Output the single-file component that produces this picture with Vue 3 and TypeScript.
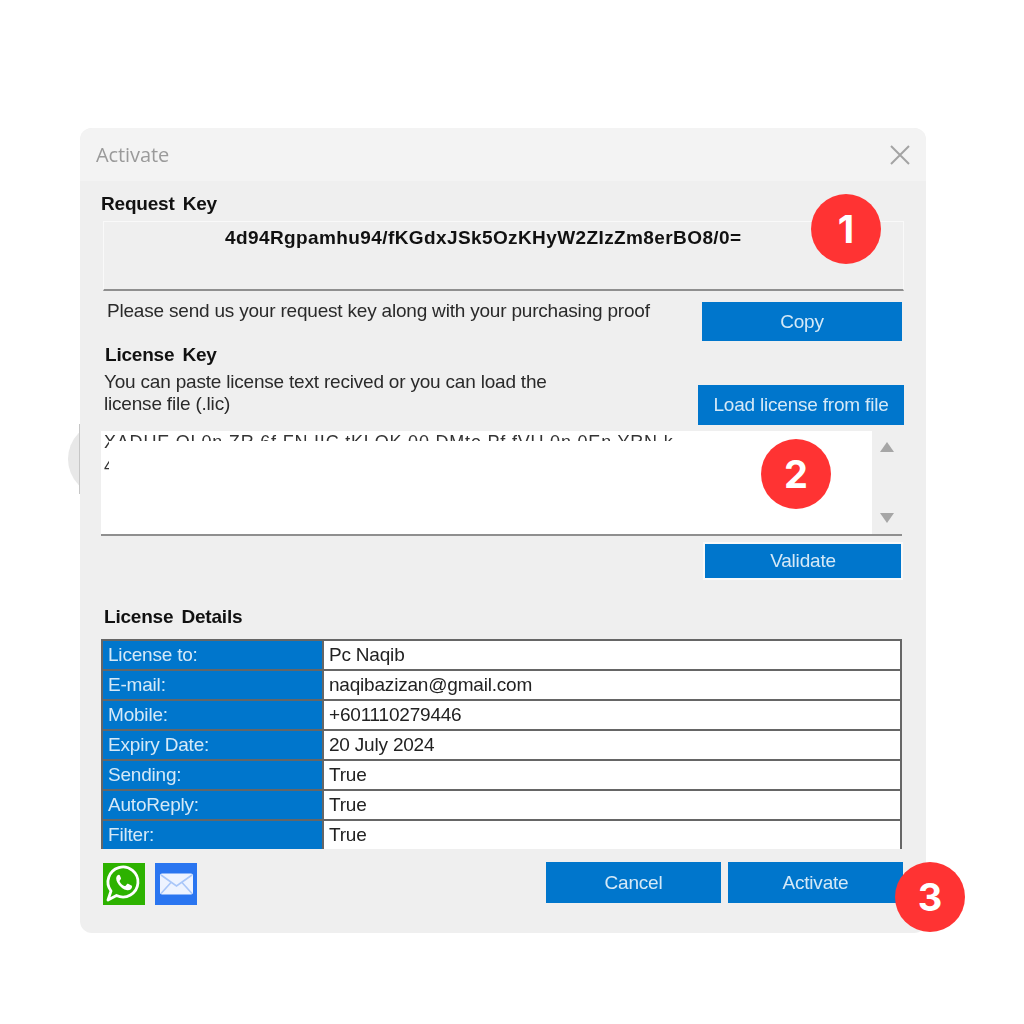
<script setup lang="ts">
const rows: [string, string][] = [
  ['License to:', 'Pc Naqib'],
  ['E-mail:', 'naqibazizan@gmail.com'],
  ['Mobile:', '+601110279446'],
  ['Expiry Date:', '20 July 2024'],
  ['Sending:', 'True'],
  ['AutoReply:', 'True'],
  ['Filter:', 'True'],
]
</script>

<template>
  <div class="page">
    <div class="ghost"></div>
    <div class="window">
      <header class="titlebar">
        <span class="title">Activate</span>
        <svg class="close" width="20" height="20" viewBox="0 0 20 20"><path d="M1 1 L19 19 M19 1 L1 19" stroke="#a3a3a3" stroke-width="2" fill="none" /></svg>
      </header>
      <div class="body">
        <h2 class="head">Request Key</h2>
        <div class="keybox"><span class="keytext">4d94Rgpamhu94/fKGdxJSk5OzKHyW2ZIzZm8erBO8/0=</span></div>
        <div class="send-row">
          <p class="text send">Please send us your request key along with your purchasing proof</p>
          <button class="btn copy">Copy</button>
        </div>
        <div class="license-row">
          <div>
            <h2 class="head head-license">License Key</h2>
            <p class="text paste">You can paste license text recived or you can load the<br />license file (.lic)</p>
          </div>
          <button class="btn load">Load license from file</button>
        </div>
        <div class="textarea">
          <div class="ta-content">
            <div class="ta-line">XADUE OL0n ZR 6f FN IIC tKLOK 00 DMte Pf fVU 0n 0En YRN k</div>
            <div class="ta-line">4</div>
            <div class="ta-cover"></div>
          </div>
          <div class="scroll">
            <svg width="14" height="10" viewBox="0 0 14 10"><path d="M7 0 L14 10 L0 10 Z" fill="#a6a6a6" /></svg>
            <svg width="14" height="10" viewBox="0 0 14 10"><path d="M0 0 L14 0 L7 10 Z" fill="#a6a6a6" /></svg>
          </div>
        </div>
        <div class="validate-row"><button class="btn validate">Validate</button></div>
        <h2 class="head head-details">License Details</h2>
        <div class="table">
          <div v-for="r in rows" :key="r[0]" class="row">
            <div class="cell label">{{ r[0] }}</div>
            <div class="cell value">{{ r[1] }}</div>
          </div>
        </div>
        <div class="footer">
          <div class="icons">
            <svg class="icon" width="42" height="42" viewBox="0 0 42 42">
              <rect width="42" height="42" fill="#2db200" />
              <path d="M5 37 L8 28 A15 15 0 1 1 13.5 32.5 Z" fill="none" stroke="#fff" stroke-width="2.8" stroke-linejoin="round" />
              <path transform="translate(21 19.5) scale(.85) translate(-21.5 -21.4)" d="M15.6 12.2 C14.2 12.2 12.3 14 12.3 16.8 C12.3 20 14.6 23 15.6 24.2 C17 26 20.4 29.6 25.4 30.6 C28 31 30.4 29.2 30.8 27.4 C31 26.4 31 25.6 30.8 25.3 L26.3 23 C25.7 22.8 25.3 22.9 24.9 23.4 L23.4 25.3 C23 25.7 22.6 25.7 22.1 25.5 C19.6 24.4 17.6 22.4 16.4 20.1 C16.2 19.6 16.3 19.3 16.6 18.9 L17.8 17.4 C18.1 17 18.1 16.6 17.9 16.2 L16.5 12.9 C16.3 12.4 16 12.2 15.6 12.2 Z" fill="#fff" />
            </svg>
            <svg class="icon" width="42" height="42" viewBox="0 0 42 42">
              <rect width="42" height="42" fill="#2a75f0" />
              <rect x="5" y="10.5" width="33" height="21" rx="2" fill="#eef3ff" />
              <path d="M6 12 L21.500 23 L37 12 M6 30.500 L16 19.500 M37 30.500 L27 19.500" stroke="#a9c6f9" stroke-width="1.6" fill="none" />
            </svg>
          </div>
          <div class="actions">
            <button class="btn action">Cancel</button>
            <button class="btn action">Activate</button>
          </div>
        </div>
      </div>
    </div>
    <span class="badge b1">1</span>
    <span class="badge b2">2</span>
    <span class="badge b3">3</span>
  </div>
</template>

<style>
html, body { background: #fff; }
</style>

<style scoped>
.page {
  position: relative;
  width: 1024px;
  height: 1024px;
  padding: 128px 98px 0 80px;
  box-sizing: border-box;
  font-family: "Liberation Sans", Arial, sans-serif;
  overflow: hidden;
}
.ghost {
  position: absolute;
  left: 68px;
  top: 423px;
  width: 70px;
  height: 72px;
  border-radius: 50%;
  background: #e8e8e8;
}
.ghost::after {
  content: "";
  position: absolute;
  left: 11px;
  top: 1px;
  width: 1px;
  height: 70px;
  background: #c6c6c6;
}
.window {
  position: relative;
  height: 805px;
  background: #efefef;
  border-radius: 12px;
  overflow: hidden;
}
.titlebar {
  height: 53px;
  background: #f3f3f3;
  display: flex;
  align-items: center;
  justify-content: space-between;
  padding: 0 16px;
  box-sizing: border-box;
  filter: blur(0.4px);
}
.title { font-family: "Open Sans", sans-serif; font-size: 20px; color: #9a9a9a; letter-spacing: -0.1px; }
.close { display: block; }
.body { padding: 11px 22px 0 21px; filter: blur(0.5px); }
.head { margin: 0; font-size: 19px; font-weight: 700; color: #111; line-height: 24px; word-spacing: 3px; letter-spacing: -0.2px; }
.head-license { margin-left: 1px; }
.head-details { margin: 27px 0 0 3px; }
.keybox {
  margin: 5px 0 0 2px;
  height: 70px;
  box-sizing: border-box;
  background: #efefef;
  border: 1px solid #f9f9f9;
  border-bottom: 2px solid #8f8f8f;
  padding: 3px 0 0 121px;
}
.keytext { font-size: 19px; font-weight: 700; color: #111; line-height: 26px; white-space: nowrap; letter-spacing: 0.4px; }
.send-row { display: flex; justify-content: space-between; margin: 11px 2px 0 6px; align-items: flex-start; }
.text { margin: 0; font-size: 19px; color: #2a2a2a; line-height: 22px; white-space: nowrap; letter-spacing: -0.2px; }
.send { margin-top: -2px; }
.btn {
  display: flex;
  align-items: center;
  justify-content: center;
  border: 0;
  padding: 0;
  background: #0076cc;
  color: #d5e9f7;
  font-family: inherit;
  font-size: 19px;
  letter-spacing: -0.2px;
}
.copy { width: 200px; height: 39px; }
.license-row { display: flex; justify-content: space-between; margin: 2px 0 0 3px; align-items: flex-start; }
.paste { margin-top: 4px; }
.load { width: 206px; height: 40px; margin-top: 42px; }
.textarea {
  display: flex;
  margin: 6px 2px 0 0;
  height: 103px;
  border-bottom: 2px solid #8f8f8f;
  background: #fff;
}
.ta-content { position: relative; flex: 1; overflow: hidden; }
.ta-line { font-size: 18px; color: #333; padding: 0 0 0 3px; margin-top: -1px; white-space: nowrap; line-height: 25px; letter-spacing: 0.8px; }
.ta-cover { position: absolute; left: 8px; right: 0; top: 10px; bottom: 0; background: #fff; }
.scroll {
  width: 30px;
  background: #efefef;
  display: flex;
  flex-direction: column;
  justify-content: space-between;
  align-items: center;
  padding: 11px 0;
  box-sizing: border-box;
}
.validate-row { display: flex; justify-content: flex-end; margin: 8px 3px 0 0; }
.validate { width: 196px; height: 34px; box-shadow: 0 0 0 2px #f9f9f9; }
.table { margin: 10px 2px 0 0; height: 210px; box-sizing: border-box; border: 2px solid #666; background: #666; display: grid; grid-auto-rows: 1fr; row-gap: 2px; }
.row { display: grid; grid-template-columns: 219px 1fr; column-gap: 2px; }
.cell { font-size: 19px; line-height: 28px; padding-left: 5px; white-space: nowrap; letter-spacing: -0.2px; }
.label { background: #0076cc; color: #d5e9f7; }
.value { background: #fff; color: #222; }
.footer { display: flex; justify-content: space-between; align-items: flex-start; margin: 13px 1px 0 2px; }
.icons { display: flex; gap: 10px; margin-top: 1px; }
.icon { display: block; }
.actions { display: flex; gap: 7px; }
.action { width: 175px; height: 41px; }
.badge {
  position: absolute;
  width: 70px;
  height: 70px;
  border-radius: 50%;
  background: #ff3333;
  color: #fff;
  font-family: "Inter", "Liberation Sans", sans-serif;
  font-weight: 700;
  font-size: 38px;
  display: flex;
  align-items: center;
  justify-content: center;
}
.b1 { left: 811px; top: 194px; }
.b2 { left: 761px; top: 439px; }
.b3 { left: 895px; top: 862px; }
</style>
